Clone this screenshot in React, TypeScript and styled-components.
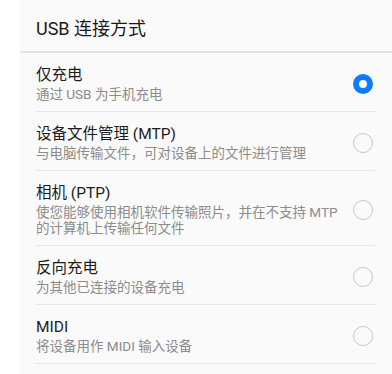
import styled, { createGlobalStyle } from 'styled-components'

interface UsbOption {
  id: string
  title: string
  description: string
}

const options: UsbOption[] = [
  { id: 'charge', title: '仅充电', description: '通过 USB 为手机充电' },
  {
    id: 'mtp',
    title: '设备文件管理 (MTP)',
    description: '与电脑传输文件，可对设备上的文件进行管理',
  },
  {
    id: 'ptp',
    title: '相机 (PTP)',
    description: '使您能够使用相机软件传输照片，并在不支持 MTP 的计算机上传输任何文件',
  },
  { id: 'reverse', title: '反向充电', description: '为其他已连接的设备充电' },
  { id: 'midi', title: 'MIDI', description: '将设备用作 MIDI 输入设备' },
]

const selectedId = 'charge'

export default function App() {
  return (
    <>
      <GlobalStyle />
      <Page>
        <Panel>
          <Header>USB 连接方式</Header>
          <List>
            {options.map((option) => (
              <Row key={option.id}>
                <TextBlock>
                  <Title>{option.title}</Title>
                  <Description>{option.description}</Description>
                </TextBlock>
                <Radio $checked={option.id === selectedId} />
              </Row>
            ))}
          </List>
        </Panel>
      </Page>
    </>
  )
}

const GlobalStyle = createGlobalStyle`
  html, body {
    margin: 0;
    padding: 0;
    background: #ffffff;
  }

  body {
    font-family: Roboto, "Noto Sans CJK SC", "Noto Sans", sans-serif;
    -webkit-font-smoothing: antialiased;
  }
`

const Page = styled.div`
  width: 392px;
  height: 374px;
  overflow: hidden;
  padding-left: 20px;
  box-sizing: border-box;
`

const Panel = styled.div`
  height: 100%;
  background: #fafafa;
`

const Header = styled.div`
  padding: 18px 16px 11px;
  font-size: 18px;
  line-height: 22px;
  color: #1a1a1a;
  border-bottom: 2px solid #e2e2e2;
`

const List = styled.div`
  padding: 0 17px 0 16px;
`

const Row = styled.div`
  display: flex;
  align-items: center;
  gap: 12px;
  padding: 12px 2px 9px 0;
  border-bottom: 1px solid #e8e8e8;
`

const TextBlock = styled.div`
  flex: 1;
  display: flex;
  flex-direction: column;
  gap: 1px;
`

const Title = styled.div`
  font-size: 15.5px;
  line-height: 20px;
  color: #1c1c1c;
`

const Description = styled.div`
  font-size: 13.5px;
  line-height: 16px;
  color: #8c8c8c;
`

const Radio = styled.span<{ $checked: boolean }>`
  flex: none;
  width: 20px;
  height: 20px;
  box-sizing: border-box;
  border-radius: 50%;
  border: ${({ $checked }) =>
    $checked ? '6px solid #0a7cff' : '1px solid #c6c6c6'};
  background: #fafafa;
`
